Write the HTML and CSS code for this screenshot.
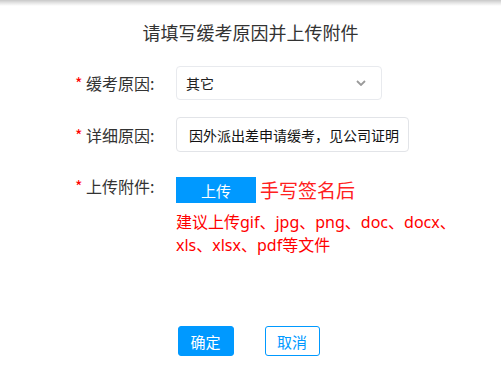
FILE: index.html
```html
<!DOCTYPE html>
<html lang="zh-CN">
<head>
  <meta charset="UTF-8" />
  <title>缓考申请</title>
  <link rel="stylesheet" href="styles.css">
</head>
<body>
  <div class="dialog">
    <h1 class="title">请填写缓考原因并上传附件</h1>

    <div class="row row-select">
      <label class="label"><span class="req">*</span> 缓考原因:</label>
      <div class="select">
        <span>其它</span>
        <svg class="chevron" width="10" height="6" viewBox="0 0 10 6">
          <path d="M1 1 L5 5 L9 1" fill="none" stroke="#9a9a9a" stroke-width="1.8"/>
        </svg>
      </div>
    </div>

    <div class="row row-input">
      <label class="label"><span class="req">*</span> 详细原因:</label>
      <div class="input">因外派出差申请缓考，见公司证明</div>
    </div>

    <div class="row row-upload">
      <label class="label"><span class="req">*</span> 上传附件:</label>
      <div class="upload">
        <div class="upload-line">
          <button class="btn-upload">上传</button>
          <span class="sign">手写签名后</span>
        </div>
        <p class="hint">建议上传gif、jpg、png、doc、docx、xls、xlsx、pdf等文件</p>
      </div>
    </div>

    <div class="footer">
      <button class="btn btn-primary">确定</button>
      <button class="btn btn-plain">取消</button>
    </div>
  </div>
</body>
</html>
```

FILE: styles.css
```css
html, body {
  margin: 0;
  padding: 0;
  background: #ffffff;
}
body {
  font-family: "Noto Sans CJK SC", "Noto Sans", sans-serif;
  color: #333333;
}
.dialog {
  width: 501px;
  height: 385px;
  box-sizing: border-box;
  padding-top: 20px;
  background: linear-gradient(to bottom, #c8c8c8 0px, #e6e6e6 3px, #ffffff 6px);
}
.title {
  margin: 0;
  font-size: 18px;
  font-weight: normal;
  line-height: 24px;
  text-align: center;
  color: #333333;
}
.row {
  display: flex;
  align-items: center;
  padding-left: 75px;
}
.label {
  width: 101px;
  font-size: 16px;
  line-height: 20px;
  color: #333333;
}
.req {
  color: #ff0000;
}
.row-select {
  margin-top: 22px;
}
.select {
  width: 206px;
  height: 34px;
  box-sizing: border-box;
  border: 1px solid #e8eaee;
  border-radius: 4px;
  display: flex;
  align-items: center;
  justify-content: space-between;
  padding: 0 15px 0 9px;
  font-size: 14px;
  color: #222222;
}
.chevron {
  display: block;
}
.row-input {
  margin-top: 17px;
}
.input {
  width: 233px;
  height: 35px;
  box-sizing: border-box;
  border: 1px solid #e2e4e8;
  border-radius: 4px;
  padding-left: 12px;
  display: flex;
  align-items: center;
  font-size: 14px;
  color: #111111;
}
.row-upload {
  margin-top: 25px;
  align-items: flex-start;
}
.row-upload .label {
  margin-top: -1px;
}
.upload-line {
  display: flex;
  align-items: center;
  gap: 4px;
}
.btn-upload {
  width: 80px;
  height: 26px;
  border: none;
  background: #0099ff;
  color: #ffffff;
  font-family: inherit;
  font-size: 15px;
  padding: 0;
}
.sign {
  font-size: 19px;
  color: #ff2020;
  line-height: 26px;
}
.hint {
  margin: 8px 0 0 0;
  width: 292px;
  font-family: "Noto Sans", "Noto Sans CJK SC", sans-serif;
  font-size: 16px;
  line-height: 23px;
  color: #ff0000;
}
.footer {
  display: flex;
  justify-content: center;
  gap: 31px;
  margin-top: 69px;
  padding-right: 4px;
}
.btn {
  height: 30px;
  width: 56px;
  box-sizing: border-box;
  border-radius: 3px;
  font-family: inherit;
  font-size: 15px;
  padding: 0;
}
.btn-primary {
  background: #0099ff;
  border: 1px solid #0099ff;
  color: #ffffff;
}
.btn-plain {
  background: #ffffff;
  border: 1px solid #0099ff;
  color: #0099ff;
  width: 55px;
}
```
